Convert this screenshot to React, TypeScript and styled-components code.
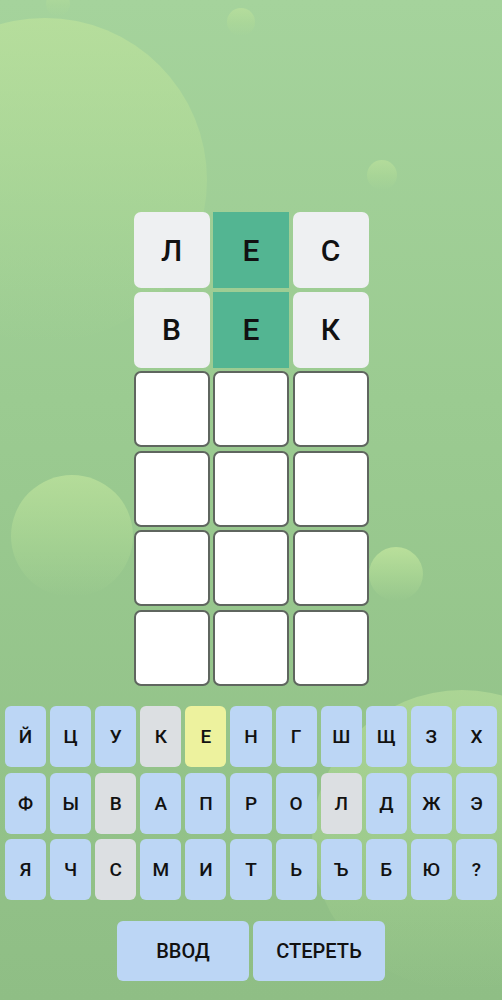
import React, { FC, ReactElement } from 'react';
import styled, { createGlobalStyle } from 'styled-components';

type TileState = 'empty' | 'absent' | 'correct';
type KeyState = 'idle' | 'absent' | 'present';

const GlobalStyle = createGlobalStyle`
    html, body {
        margin: 0;
        padding: 0;
    }
    body {
        font-family: Roboto, "Noto Sans", "Liberation Sans", sans-serif;
        background: #98c98e;
    }
`;

const board: { letter: string; state: TileState }[][] = [
    [ { letter: 'Л', state: 'absent' }, { letter: 'Е', state: 'correct' }, { letter: 'С', state: 'absent' } ],
    [ { letter: 'В', state: 'absent' }, { letter: 'Е', state: 'correct' }, { letter: 'К', state: 'absent' } ],
];

const rows = [
    'ЙЦУКЕНГШЩЗХ',
    'ФЫВАПРОЛДЖЭ',
    'ЯЧСМИТЬЪБЮ?',
];

const keyStates: Record<string, KeyState> = {
    'К': 'absent',
    'В': 'absent',
    'Л': 'absent',
    'С': 'absent',
    'Е': 'present',
};

// decorative background circles
const bubbles = [
    { x: 45, y: 180, r: 162, o: 0.7 },
    { x: 58, y: 4, r: 12, o: 0.45 },
    { x: 241, y: 22, r: 14, o: 0.65 },
    { x: 382, y: 175, r: 15, o: 0.65 },
    { x: 72, y: 536, r: 61, o: 0.75 },
    { x: 396, y: 574, r: 27, o: 0.9 },
    { x: 462, y: 840, r: 150, o: 0.55 },
];

const App: FC = (): ReactElement => {
    const cells = [];
    for ( let r = 0; r < 6; r++ ) {
        for ( let c = 0; c < 3; c++ ) {
            const cell = board[ r ] ? board[ r ][ c ] : { letter: '', state: 'empty' as TileState };
            cells.push( <Tile key={ `${ r }-${ c }` } $state={ cell.state }>{ cell.letter }</Tile> );
        }
    }

    return (
        <Screen>
            <GlobalStyle />
            { bubbles.map( ( b, i ) => (
                <Bubble
                    key={ i }
                    style={ { left: b.x - b.r, top: b.y - b.r, width: b.r * 2, height: b.r * 2, opacity: b.o } }
                />
            ) ) }
            <Content>
                <Board>{ cells }</Board>
                <Keyboard>
                    { rows.map( ( row ) => (
                        <KeyRow key={ row }>
                            { row.split( '' ).map( ( ch ) => (
                                <Key key={ ch } $state={ keyStates[ ch ] || 'idle' }>{ ch }</Key>
                            ) ) }
                        </KeyRow>
                    ) ) }
                </Keyboard>
                <Actions>
                    <ActionButton>ВВОД</ActionButton>
                    <ActionButton>СТЕРЕТЬ</ActionButton>
                </Actions>
            </Content>
        </Screen>
    );
};

const Screen = styled.div`
    position: relative;
    width: 502px;
    height: 1000px;
    overflow: hidden;
    background: linear-gradient( 180deg, #a5d39c 0%, #9bcb91 40%, #8fbe85 100% );
`;

const Bubble = styled.div`
    position: absolute;
    border-radius: 50%;
    background: linear-gradient( 180deg, #bde29c 0%, rgba( 178, 220, 150, 0.6 ) 55%, rgba( 160, 210, 140, 0 ) 100% );
    pointer-events: none;
`;

const Content = styled.div`
    position: relative;
    display: flex;
    flex-direction: column;
    align-items: center;
    padding-top: 212px;
`;

const Board = styled.div`
    display: grid;
    grid-template-columns: repeat( 3, 76px );
    grid-auto-rows: 76px;
    gap: 3.5px;
`;

const Tile = styled.div<{ $state: TileState }>`
    box-sizing: border-box;
    display: flex;
    align-items: center;
    justify-content: center;
    font-size: 30px;
    font-weight: 500;
    color: #111;
    border-radius: ${ ( p ) => ( p.$state === 'correct' ? '0' : '7px' ) };
    background: ${ ( p ) => ( p.$state === 'correct' ? '#53b592' : p.$state === 'absent' ? '#eef0f2' : '#ffffff' ) };
    border: ${ ( p ) => ( p.$state === 'empty' ? '2px solid #5f665f' : 'none' ) };
`;

const Keyboard = styled.div`
    box-sizing: border-box;
    width: 100%;
    padding: 0 5px;
    margin-top: 20.5px;
    display: flex;
    flex-direction: column;
    gap: 5.5px;
`;

const KeyRow = styled.div`
    display: flex;
    gap: 4px;
`;

const Key = styled.div<{ $state: KeyState }>`
    flex: 1;
    height: 61px;
    display: flex;
    align-items: center;
    justify-content: center;
    border-radius: 6px;
    font-size: 19px;
    font-weight: 500;
    color: #111;
    background: ${ ( p ) => ( p.$state === 'absent' ? '#dcdfe2' : p.$state === 'present' ? '#edf29e' : '#bcd6f5' ) };
`;

const Actions = styled.div`
    display: flex;
    gap: 4px;
    margin-top: 21px;
`;

const ActionButton = styled.div`
    width: 132px;
    height: 60px;
    display: flex;
    align-items: center;
    justify-content: center;
    border-radius: 6px;
    background: #bcd6f5;
    font-size: 20px;
    font-weight: 500;
    color: #111;
`;

export default App;
